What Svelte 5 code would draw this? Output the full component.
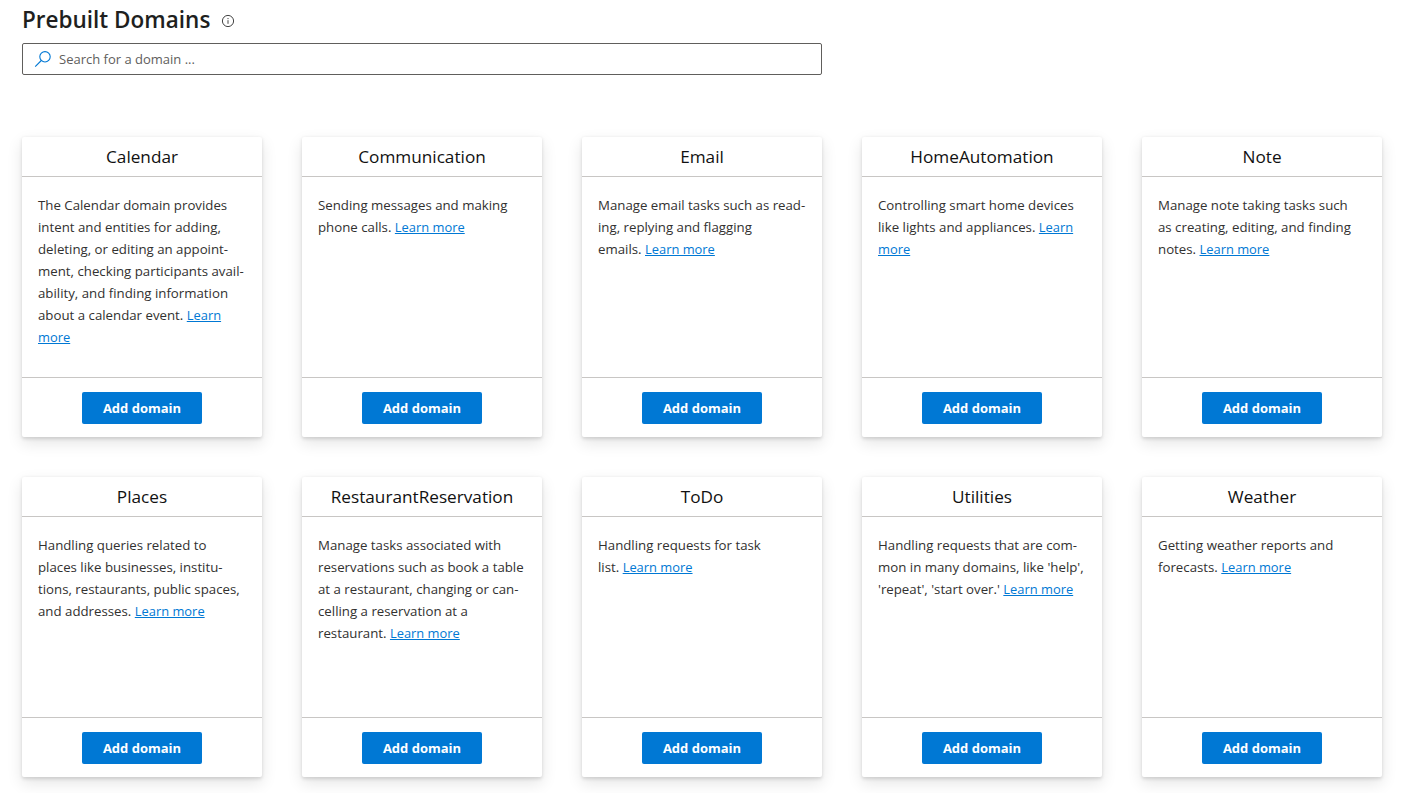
<script>
	// Line breaks are kept by hand so that the hyphenation stays as it is in the product
	const domains = [
		{ name: 'Calendar', lines: ['The Calendar domain provides', 'intent and entities for adding,', 'deleting, or editing an appoint-', 'ment, checking participants avail-', 'ability, and finding information', 'about a calendar event.'], link: ['Learn', 'more'] },
		{ name: 'Communication', lines: ['Sending messages and making', 'phone calls.'], link: ['Learn more'] },
		{ name: 'Email', lines: ['Manage email tasks such as read-', 'ing, replying and flagging', 'emails.'], link: ['Learn more'] },
		{ name: 'HomeAutomation', lines: ['Controlling smart home devices', 'like lights and appliances.'], link: ['Learn', 'more'] },
		{ name: 'Note', lines: ['Manage note taking tasks such', 'as creating, editing, and finding', 'notes.'], link: ['Learn more'] },
		{ name: 'Places', lines: ['Handling queries related to', 'places like businesses, institu-', 'tions, restaurants, public spaces,', 'and addresses.'], link: ['Learn more'] },
		{ name: 'RestaurantReservation', lines: ['Manage tasks associated with', 'reservations such as book a table', 'at a restaurant, changing or can-', 'celling a reservation at a', 'restaurant.'], link: ['Learn more'] },
		{ name: 'ToDo', lines: ['Handling requests for task', 'list.'], link: ['Learn more'] },
		{ name: 'Utilities', lines: ['Handling requests that are com-', "mon in many domains, like 'help',", "'repeat', 'start over.'"], link: ['Learn more'] },
		{ name: 'Weather', lines: ['Getting weather reports and', 'forecasts.'], link: ['Learn more'] }
	];
</script>

<div class="page">
	<div class="title-row">
		<h1>Prebuilt Domains</h1>
		<svg class="info" width="14" height="14" viewBox="0 0 14 14" fill="none" stroke="#444" aria-hidden="true">
			<circle cx="7" cy="7" r="5.6" />
			<path d="M7 6.2v3.6M7 4v1.1" />
		</svg>
	</div>

	<div class="search">
		<svg width="18" height="18" viewBox="0 0 18 18" fill="none" stroke="#0078d4" stroke-width="1.1" aria-hidden="true">
			<circle cx="11" cy="6.8" r="5.2" />
			<path d="M7.3 10.5 1.2 16.6" />
		</svg>
		<span>Search for a domain ...</span>
	</div>

	<div class="grid">
		{#each domains as d (d.name)}
			<div class="card">
				<div class="card-title">{d.name}</div>
				<div class="card-body">
					{#each d.lines as line, i}
						{#if i < d.lines.length - 1}
							<div>{line}</div>
						{:else}
							<div>{line} <a href="#learn">{d.link[0]}</a></div>
						{/if}
					{/each}
					{#if d.link[1]}
						<div><a href="#learn">{d.link[1]}</a></div>
					{/if}
				</div>
				<div class="card-foot">
					<button type="button">Add domain</button>
				</div>
			</div>
		{/each}
	</div>
</div>

<style>
	:global(body) {
		background: #fff;
	}

	.page {
		font-family: 'Open Sans', 'Noto Sans', sans-serif;
		color: #323130;
		padding: 0 22px;
		height: 793px;
		overflow: hidden;
		box-sizing: border-box;
	}

	.title-row {
		display: flex;
		align-items: center;
		gap: 11px;
		height: 43px;
	}

	h1 {
		margin: 0 0 3px;
		font-size: 22.5px;
		font-weight: 600;
		color: #201f1e;
		line-height: 40px;
	}

	.info {
		margin-top: -1px;
	}

	.search {
		width: 800px;
		height: 32px;
		box-sizing: border-box;
		border: 1px solid #605e5c;
		border-radius: 2px;
		display: flex;
		align-items: center;
		gap: 9px;
		padding-left: 11px;
		font-size: 13px;
		color: #605e5c;
	}

	.search span {
		margin-left: -2px;
	}

	.grid {
		display: grid;
		grid-template-columns: repeat(5, 240px);
		grid-auto-rows: 300px;
		gap: 40px;
		margin-top: 62px;
	}

	.card {
		background: #fff;
		border-radius: 2px;
		box-shadow: 0 1.6px 3.6px rgba(0, 0, 0, 0.13), 0 6px 16px rgba(0, 0, 0, 0.11);
		display: flex;
		flex-direction: column;
	}

	.card-title {
		height: 40px;
		box-sizing: border-box;
		border-bottom: 1px solid #c8c6c4;
		text-align: center;
		font-size: 17.2px;
		font-weight: 500;
		line-height: 40px;
		color: #111;
	}

	.card-body {
		flex: 1;
		padding: 17px 0 0 16px;
		font-size: 13.25px;
		line-height: 22px;
		white-space: nowrap;
	}

	a {
		color: #0078d4;
		font-size: 12.9px;
		text-decoration: underline;
	}

	.card-foot {
		height: 60px;
		box-sizing: border-box;
		border-top: 1px solid #c8c6c4;
		display: flex;
		justify-content: center;
		padding-top: 14px;
	}

	button {
		width: 120px;
		height: 32px;
		background: #0078d4;
		color: #fff;
		border: 0;
		border-radius: 2px;
		font-family: inherit;
		font-size: 13px;
		font-weight: 700;
		padding: 0;
	}
</style>
